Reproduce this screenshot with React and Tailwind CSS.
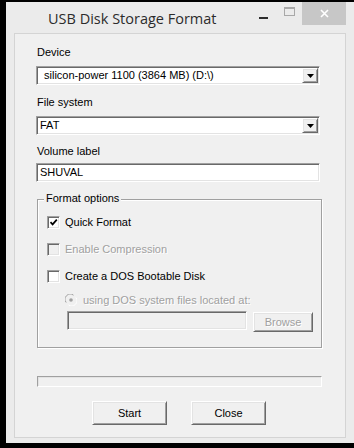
import React from 'react'

const sunken =
  'border border-t-[#a0a0a0] border-l-[#a0a0a0] border-b-white border-r-white shadow-[inset_1px_1px_0_#696969,inset_-1px_-1px_0_#e3e3e3]'
const raised =
  'border border-t-white border-l-white border-b-[#696969] border-r-[#696969] shadow-[inset_1px_1px_0_#e3e3e3,inset_-1px_-1px_0_#a0a0a0] bg-[#f0f0f0]'

function Select({ value, textPad }) {
  return (
    <div className={`w-[284px] h-[19px] bg-white flex ${sunken}`}>
      <div className={`flex-1 leading-[15px] pt-[1px] ${textPad}`}>{value}</div>
      <div className={`w-[16px] h-[15px] mt-[1px] mr-[1px] flex items-center justify-center ${raised}`}>
        <svg width="7" height="4" viewBox="0 0 7 4">
          <path d="M0 0h7L3.5 4z" fill="#000" />
        </svg>
      </div>
    </div>
  )
}

function Checkbox({ checked, disabled, label }) {
  return (
    <div className="flex items-center h-[13px]">
      <div className={`w-[13px] h-[13px] flex items-center justify-center ${disabled ? 'bg-[#f0f0f0]' : 'bg-white'} ${sunken}`}>
        {checked && (
          <svg width="9" height="9" viewBox="0 0 9 9">
            <path d="M1.5 4.2 L3.6 6.4 L7.8 1.6" stroke="#000" strokeWidth="1.7" fill="none" />
          </svg>
        )}
      </div>
      <span
        className={`ml-[5px] leading-[13px] ${disabled ? 'text-[#a0a0a0] [text-shadow:1px_1px_0_#fff]' : 'text-black'}`}
      >
        {label}
      </span>
    </div>
  )
}

export default function App() {
  return (
    <div className="w-[354px] h-[448px] bg-black pl-[6px] pt-[2px] pb-[5px] flex overflow-hidden font-['Liberation_Sans',Arial,sans-serif] text-[11px] text-black">
      <div className="flex-1 bg-[#ebebeb] flex flex-col px-[8px] pb-[5px]">
        {/* title bar */}
        <div className="h-[31px] flex items-start">
          <div className="ml-[34px] mt-[8px] text-[14.5px] leading-[18px] text-[#2b2b2b] font-['Open_Sans','Noto_Sans',sans-serif]">
            USB Disk Storage Format
          </div>
          <div className="flex-1" />
          <div className="w-[26px] h-[23px] flex items-center justify-center">
            <div className="w-[9px] h-[2px] bg-[#2d2d2d] mt-[9px]" />
          </div>
          <div className="w-[26px] h-[23px] flex items-center justify-center">
            <div className="w-[11px] h-[9px] border border-t-2 border-[#a8a8a8] mt-[-4px]" />
          </div>
          <div className="w-[44px] h-[23px] bg-[#c7c7c7] flex items-center justify-center">
            <svg width="9" height="9" viewBox="0 0 9 9">
              <path d="M1 1L8 8M8 1L1 8" stroke="#fff" strokeWidth="1.6" />
            </svg>
          </div>
        </div>

        {/* client */}
        <div className="flex-1 bg-[#f0f0f0] border border-[#d4d4d4] pl-[21px] flex flex-col">
          <div className="mt-[12px] h-[13px] leading-[13px] pl-[1px]">Device</div>
          <div className="mt-[7px]">
            <Select value="silicon-power 1100 (3864 MB) (D:\)" textPad="pl-[7px]" />
          </div>
          <div className="mt-[11px] h-[13px] leading-[13px] pl-[1px]">File system</div>
          <div className="mt-[7px]">
            <Select value="FAT" textPad="pl-[3px]" />
          </div>
          <div className="mt-[10px] h-[13px] leading-[13px] pl-[1px]">Volume label</div>
          <div className={`mt-[5px] w-[284px] h-[19px] bg-white leading-[15px] pt-[1px] pl-[3px] ${sunken}`}>SHUVAL</div>

          {/* group box */}
          <div className="relative mt-[17px] ml-[1px] w-[285px] h-[149px] border border-[#a0a0a0] shadow-[inset_1px_1px_0_#fff,1px_1px_0_#fff] pl-[9px] flex flex-col">
            <div className="absolute left-[6px] top-[-8px] px-[2px] bg-[#f0f0f0] leading-[13px]">Format options</div>
            <div className="mt-[16px]">
              <Checkbox checked label="Quick Format" />
            </div>
            <div className="mt-[14px]">
              <Checkbox checked={false} disabled label="Enable Compression" />
            </div>
            <div className="mt-[14px]">
              <Checkbox checked={false} label="Create a DOS Bootable Disk" />
            </div>
            <div className="mt-[11px] ml-[18px] flex items-center h-[12px]">
              <svg width="12" height="12" viewBox="0 0 12 12">
                <circle cx="6" cy="6" r="5.5" fill="#f0f0f0" />
                <path d="M1.2 8.5A5.2 5.2 0 0 1 8.5 1.2" stroke="#a0a0a0" fill="none" />
                <path d="M10.8 3.5A5.2 5.2 0 0 1 3.5 10.8" stroke="#fff" fill="none" />
                <circle cx="6" cy="6" r="1.8" fill="#a0a0a0" />
              </svg>
              <span className="ml-[6px] leading-[13px] text-[#a0a0a0] [text-shadow:1px_1px_0_#fff]">
                using DOS system files located at:
              </span>
            </div>
            <div className="mt-[5px] ml-[20px] flex items-start">
              <div className={`w-[180px] h-[19px] bg-[#f0f0f0] ${sunken}`} />
              <div className={`ml-[6px] mt-[1px] w-[60px] h-[20px] flex items-center justify-center text-[#a0a0a0] [text-shadow:1px_1px_0_#fff] ${raised}`}>
                Browse
              </div>
            </div>
          </div>

          {/* progress */}
          <div className="mt-[28px] ml-[1px] w-[285px] h-[11px] border border-t-[#a0a0a0] border-l-[#a0a0a0] border-b-white border-r-white shadow-[inset_1px_1px_0_#e3e3e3]" />

          {/* buttons */}
          <div className="mt-[14px] ml-[56px] flex gap-[24px]">
            <div className={`w-[75px] h-[24px] flex items-center justify-center ${raised}`}>Start</div>
            <div className={`w-[75px] h-[24px] flex items-center justify-center ${raised}`}>Close</div>
          </div>
        </div>
      </div>
    </div>
  )
}
